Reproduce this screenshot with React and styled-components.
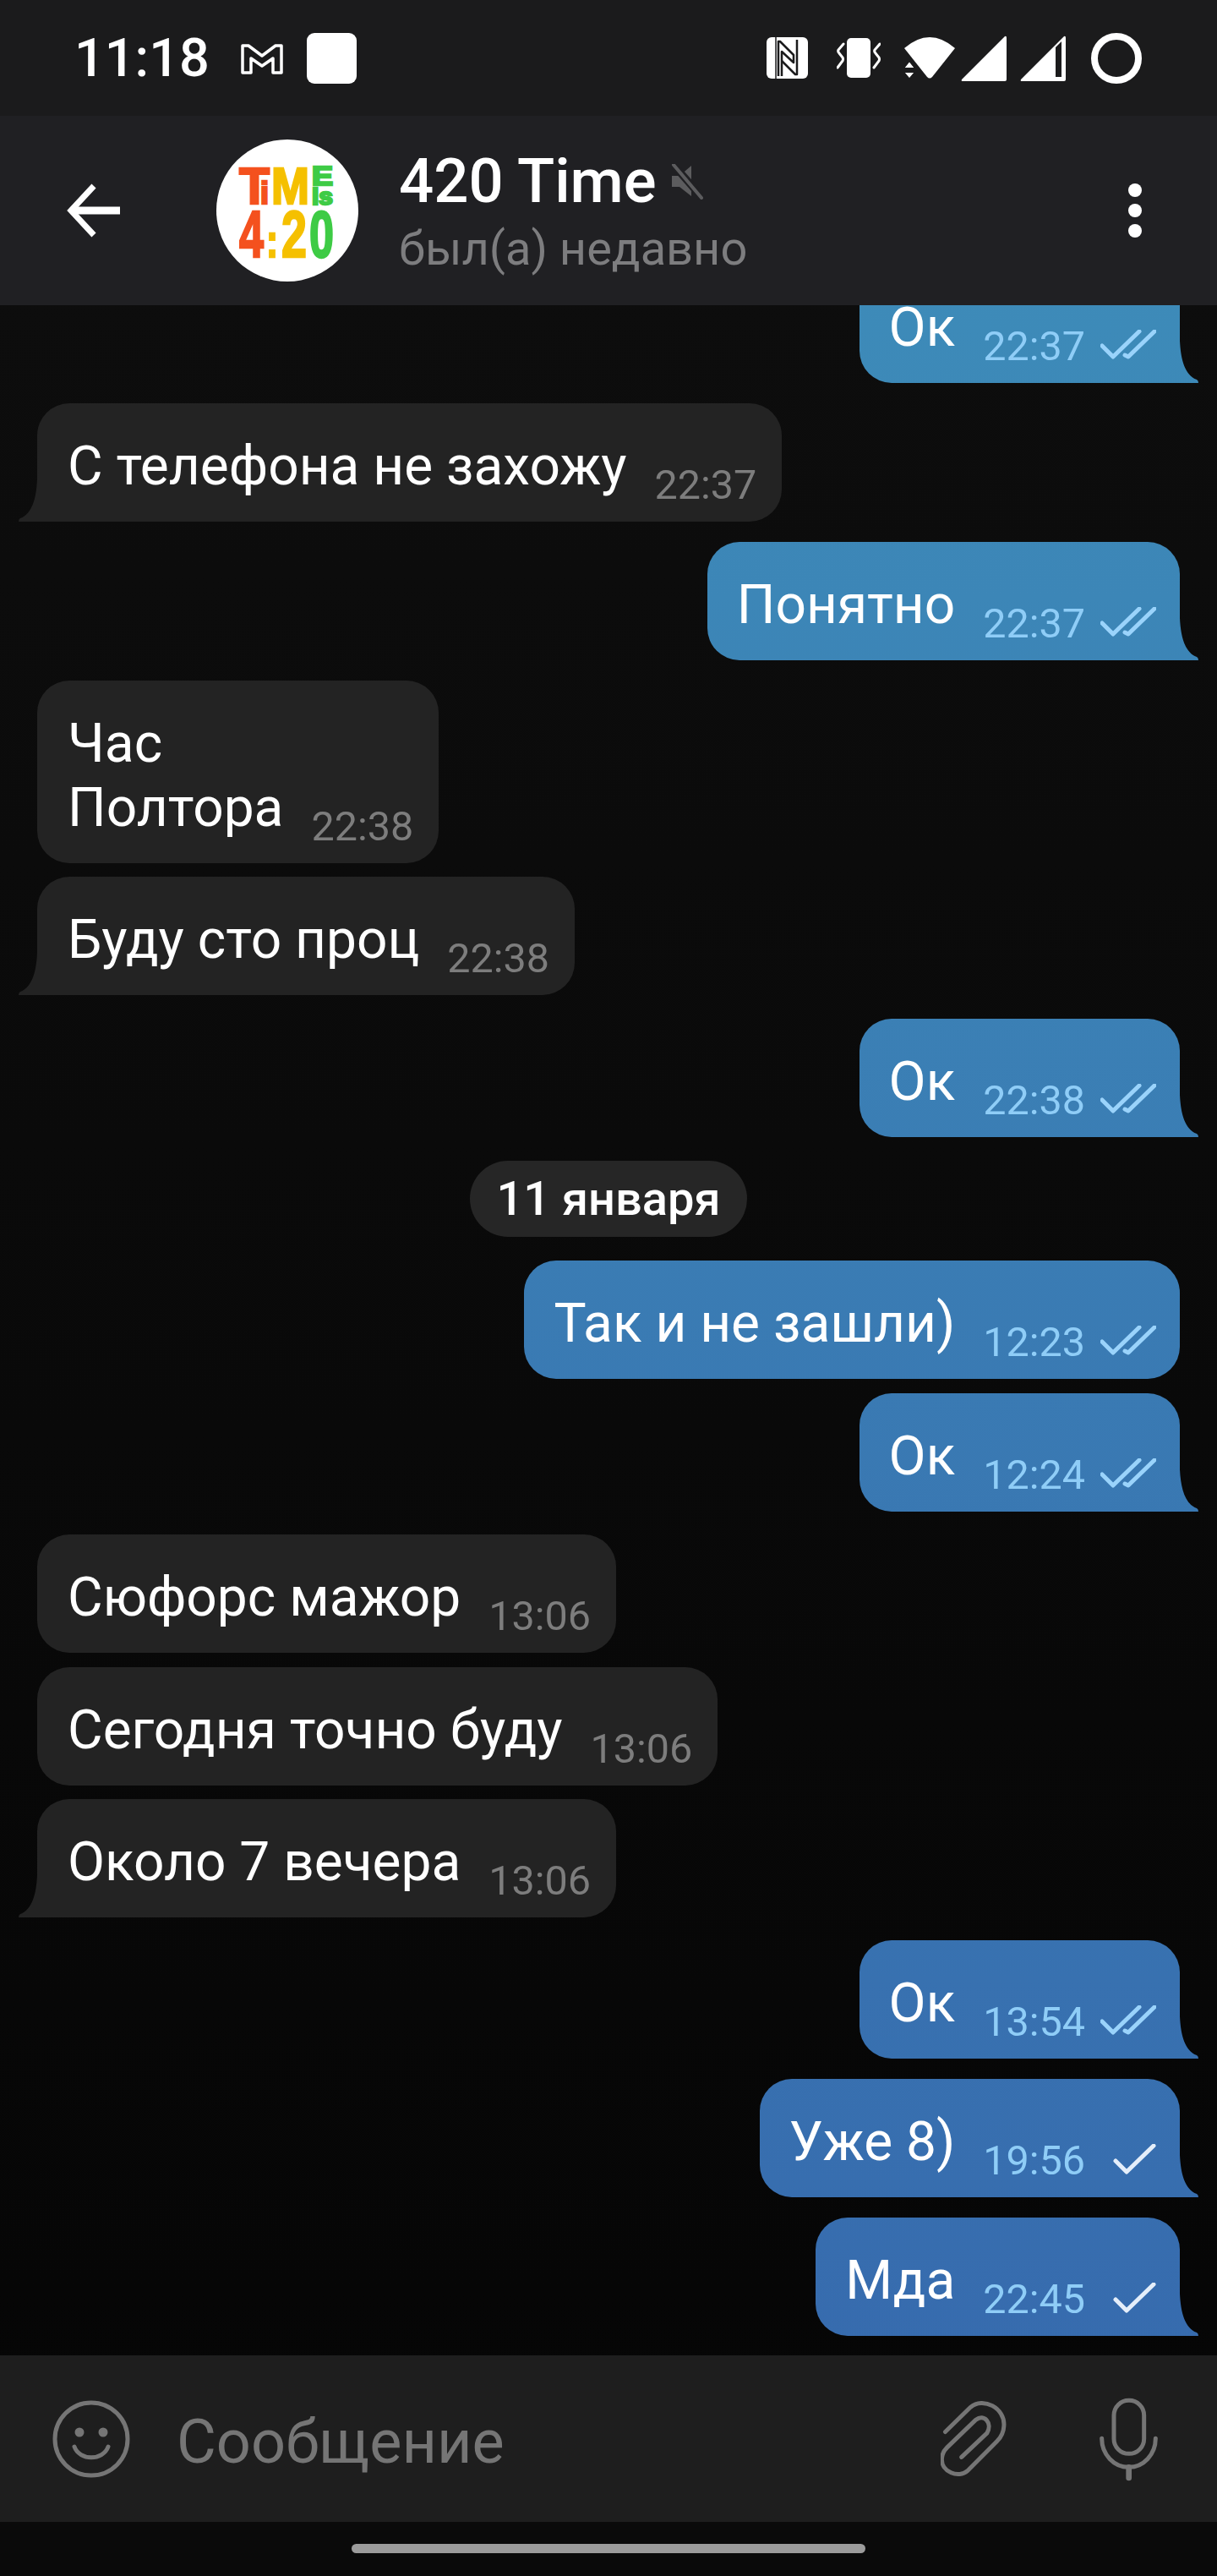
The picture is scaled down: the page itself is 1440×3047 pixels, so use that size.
import React from 'react'
import styled, { createGlobalStyle } from 'styled-components'

const GlobalStyle = createGlobalStyle`
    html, body {
        margin: 0;
        padding: 0;
        background: #0a0a0a;
    }
    body {
        font-family: Roboto, "Noto Sans", sans-serif;
    }
`

const messages = [
    { out: true, text: 'Ок', time: '22:37', ticks: 2, tail: true, gap: 0 },
    { text: 'С телефона не захожу', time: '22:37', tail: true, gap: 24 },
    { out: true, text: 'Понятно', time: '22:37', ticks: 2, tail: true, gap: 24 },
    { text: 'Час\nПолтора', time: '22:38', gap: 24 },
    { text: 'Буду сто проц', time: '22:38', tail: true, gap: 16 },
    { out: true, text: 'Ок', time: '22:38', ticks: 2, tail: true, gap: 28 },
    { date: '11 января', gap: 28 },
    { out: true, text: 'Так и не зашли)', time: '12:23', ticks: 2, gap: 28 },
    { out: true, text: 'Ок', time: '12:24', ticks: 2, tail: true, gap: 17 },
    { text: 'Сюфорс мажор', time: '13:06', gap: 27 },
    { text: 'Сегодня точно буду', time: '13:06', gap: 17 },
    { text: 'Около 7 вечера', time: '13:06', tail: true, gap: 16 },
    { out: true, text: 'Ок', time: '13:54', ticks: 2, tail: true, gap: 27 },
    { out: true, text: 'Уже 8)', time: '19:56', ticks: 1, tail: true, gap: 24 },
    { out: true, text: 'Мда', time: '22:45', ticks: 1, tail: true, gap: 24 },
]

const Ticks = ({ count }) => (
    <TickIcon viewBox="0 0 66 36" $single={count === 1}>
        {count === 1 ? (
            <path d="M18 20 L31 33 L63 2" />
        ) : (
            <>
                <path d="M2 19 L15 32 L46 2" />
                <path d="M29 30 L33 32 L64 2" />
            </>
        )}
    </TickIcon>
)

const Logo = () => (
    <svg viewBox="0 0 168 168" width="168" height="168">
        <LogoText x="27" y="76" fontSize="62" fill="#f4511e" stroke="#f4511e" textLength="36" lengthAdjust="spacingAndGlyphs">T</LogoText>
        <LogoText x="52" y="76" fontSize="36" fill="#f4511e" stroke="#f4511e" textLength="10" lengthAdjust="spacingAndGlyphs">i</LogoText>
        <LogoText x="65" y="76" fontSize="62" fill="#f5c000" stroke="#f5c000" textLength="45" lengthAdjust="spacingAndGlyphs">M</LogoText>
        <LogoText x="113" y="54" fontSize="31" fill="#3ecb45" stroke="#3ecb45" textLength="25" lengthAdjust="spacingAndGlyphs">E</LogoText>
        <LogoText x="113" y="77" fontSize="28" fill="#3ecb45" stroke="#3ecb45" textLength="25" lengthAdjust="spacingAndGlyphs">is</LogoText>
        <LogoText x="27" y="139" fontSize="78" fill="#f4511e" stroke="#f4511e" textLength="29" lengthAdjust="spacingAndGlyphs">4</LogoText>
        <LogoText x="59" y="139" fontSize="56" fill="#f5c000" stroke="#f5c000" textLength="14" lengthAdjust="spacingAndGlyphs">:</LogoText>
        <LogoText x="77" y="139" fontSize="78" fill="#f5c000" stroke="#f5c000" textLength="30" lengthAdjust="spacingAndGlyphs">2</LogoText>
        <LogoText x="110" y="139" fontSize="78" fill="#3ecb45" stroke="#3ecb45" textLength="29" lengthAdjust="spacingAndGlyphs">0</LogoText>
    </svg>
)

const App = () => {
    return (
        <Screen>
            <GlobalStyle />
            <StatusBar>
                <Clock>11:18</Clock>
                <StatusIcon viewBox="0 0 50 38" width="50" height="38" $ml={37}>
                    <path d="M2 4 H9 L25 16 L41 4 H48 V36 H38 V19 L25 28 L12 19 V36 H2 Z" fill="none" stroke="#fff" strokeWidth="3.5" strokeLinejoin="round" />
                </StatusIcon>
                <NotifySquare />
                <StatusSpacer />
                <StatusIcon viewBox="0 0 49 49" width="49" height="49">
                    <rect width="49" height="49" rx="6" fill="#fff" />
                    <path d="M11 0 V49" stroke="#1b1b1c" strokeWidth="1.5" fill="none" />
                    <path d="M14 46 V5 H16 L32 21 V30 L18 17 V46" fill="none" stroke="#1b1b1c" strokeWidth="2.5" strokeLinejoin="round" />
                    <path d="M36 3 V44 H34 L18 28" fill="none" stroke="#1b1b1c" strokeWidth="2.5" strokeLinejoin="round" />
                </StatusIcon>
                <StatusIcon viewBox="0 0 52 49" width="52" height="49" $ml={34}>
                    <rect x="12" y="1" width="28" height="47" rx="5" fill="#fff" />
                    <path d="M8 8 L2 15 Q1 17 3 19 L7 24 Q8 26 7 28 L1 36" fill="none" stroke="#fff" strokeWidth="3" strokeLinecap="round" />
                    <path d="M51 8 L45 15 Q44 17 46 19 L50 24 Q51 26 50 28 L44 36" fill="none" stroke="#fff" strokeWidth="3" strokeLinecap="round" />
                </StatusIcon>
                <StatusIcon viewBox="0 0 60 49" width="60" height="49" $ml={28}>
                    <path d="M0 13 Q30 -13 60 13 L33 47 Q30 50 27 47 Z" fill="#fff" />
                    <path d="M-1 37 L6 28 L13 37 Z M-1 41 H13 L6 49 Z" fill="#fff" stroke="#1b1b1c" strokeWidth="2" />
                    <path d="M1 36 L6 30 L11 36 Z M1 42 H11 L6 48 Z" fill="#fff" />
                </StatusIcon>
                <StatusIcon viewBox="0 0 54 54" width="54" height="54" $ml={7}>
                    <path d="M1 52 L52 1 Q54 0 54 3 V52 Q54 54 52 54 H2 Q0 54 1 52 Z" fill="#fff" />
                </StatusIcon>
                <StatusIcon viewBox="0 0 54 54" width="54" height="54" $ml={16}>
                    <path d="M1 52 L52 1 Q54 0 54 3 V52 Q54 54 52 54 H2 Q0 54 1 52 Z" fill="#fff" />
                    <path d="M42 14 L49 7 V49 H42 Z" fill="#1b1b1c" />
                </StatusIcon>
                <StatusIcon viewBox="0 0 60 60" width="60" height="60" $ml={30}>
                    <circle cx="30" cy="30" r="26" fill="none" stroke="#fff" strokeWidth="8" />
                </StatusIcon>
            </StatusBar>

            <Header>
                <svg viewBox="0 0 64 64" width="64" height="64" fill="none" stroke="#fff">
                    <path d="M63 32 H5" strokeWidth="9" />
                    <path d="M32 3 L5 32 L32 61" strokeWidth="7" />
                </svg>
                <Avatar><Logo /></Avatar>
                <ChatInfo>
                    <TitleRow>
                        <ChatTitle>420 Time</ChatTitle>
                        <svg viewBox="0 0 38 42" width="38" height="42">
                            <path d="M1 14 H10 L24 2 V38 L10 27 H1 Z" fill="#5c5c5e" />
                            <path d="M3 1 L37 40" stroke="#202023" strokeWidth="9" />
                            <path d="M3 1 L36 40" stroke="#5c5c5e" strokeWidth="4" strokeLinecap="round" />
                        </svg>
                    </TitleRow>
                    <ChatStatus>был(а) недавно</ChatStatus>
                </ChatInfo>
                <MenuDots>
                    <i /><i /><i />
                </MenuDots>
            </Header>

            <Messages>
                {messages.map((m, i) =>
                    m.date ? (
                        <DatePill key={i} $gap={m.gap}>{m.date}</DatePill>
                    ) : (
                        <Bubble key={i} $out={m.out} $tail={m.tail} $gap={m.gap}>
                            <BubbleText>{m.text}</BubbleText>
                            <Meta $out={m.out}>
                                <span>{m.time}</span>
                                {m.ticks && <Ticks count={m.ticks} />}
                            </Meta>
                        </Bubble>
                    )
                )}
            </Messages>

            <InputBar>
                <svg viewBox="0 0 92 92" width="92" height="92" fill="none" stroke="#757575">
                    <circle cx="46" cy="46" r="43" strokeWidth="5" />
                    <circle cx="32" cy="38" r="5.5" fill="#757575" stroke="none" />
                    <circle cx="60" cy="38" r="5.5" fill="#757575" stroke="none" />
                    <path d="M26 55 C32 72 60 72 66 55" strokeWidth="5" strokeLinecap="round" />
                </svg>
                <Placeholder>Сообщение</Placeholder>
                <svg viewBox="40 30 240 280" width="80" height="93" fill="none" stroke="#757575" strokeWidth="15" strokeLinecap="round">
                    <path d="M56 146 L146 58 C190 20 270 60 265 125 C264 145 255 165 240 180 L135 285 C105 312 40 290 44 240 C45 225 52 212 62 202 L165 103 C195 80 225 115 205 150 L114 236" />
                </svg>
                <MicIcon viewBox="595 20 225 300" width="75" height="100" fill="none" stroke="#757575" strokeWidth="15" strokeLinecap="round">
                    <rect x="655" y="33" width="107" height="189" rx="53" />
                    <path d="M612 168 C612 225 655 270 708 270 C760 270 803 225 803 168" />
                    <path d="M708 270 V308" strokeWidth="20" />
                </MicIcon>
            </InputBar>

            <NavBar>
                <HomePill />
            </NavBar>
        </Screen>
    )
}

//styled components
const Screen = styled.div`
    width: 1440px;
    height: 3047px;
    display: flex;
    flex-direction: column;
    overflow: hidden;
    background: linear-gradient(180deg, #0e0e0e 0%, #050505 100%);
    color: #fff;
`

const StatusBar = styled.div`
    height: 137px;
    flex: none;
    display: flex;
    align-items: center;
    padding: 0 89px 0 88px;
    background: #1b1b1c;
    box-sizing: border-box;
`

const Clock = styled.div`
    font-size: 63px;
    line-height: 63px;
    font-weight: 500;
`

const StatusIcon = styled.svg`
    flex: none;
    display: block;
    margin-left: ${props => props.$ml || 0}px;
`

const NotifySquare = styled.div`
    width: 59px;
    height: 60px;
    margin-left: 28px;
    border-radius: 9px;
    background: #fff;
`

const StatusSpacer = styled.div`
    flex: 1;
`

const Header = styled.div`
    height: 224px;
    flex: none;
    display: flex;
    align-items: center;
    padding: 0 89px 0 79px;
    background: #202023;
    box-sizing: border-box;
`

const Avatar = styled.div`
    width: 168px;
    height: 168px;
    flex: none;
    margin-left: 113px;
    border-radius: 50%;
    background: #fff;
    overflow: hidden;
`

const LogoText = styled.text`
    font-family: "Liberation Sans", Arimo, sans-serif;
    font-weight: 700;
    stroke-width: 2.5;
`

const ChatInfo = styled.div`
    flex: 1;
    margin-left: 48px;
    padding-top: 4px;
    display: flex;
    flex-direction: column;
`

const TitleRow = styled.div`
    display: flex;
    align-items: center;
    gap: 17px;
`

const ChatTitle = styled.div`
    font-size: 72.5px;
    line-height: 84px;
    font-weight: 500;
`

const ChatStatus = styled.div`
    font-size: 56px;
    line-height: 70px;
    margin-top: 2px;
    color: #7d7d7f;
`

const MenuDots = styled.div`
    width: 16px;
    display: flex;
    flex-direction: column;
    gap: 8px;

    i {
        width: 16px;
        height: 16px;
        border-radius: 50%;
        background: #fff;
    }
`

const Messages = styled.div`
    flex: 1;
    min-height: 0;
    display: flex;
    flex-direction: column;
    justify-content: flex-end;
    overflow: hidden;
    padding: 0 44px 23px;
`

const Bubble = styled.div`
    flex: none;
    position: relative;
    align-self: ${props => (props.$out ? 'flex-end' : 'flex-start')};
    display: flex;
    align-items: flex-end;
    gap: 33px;
    margin-top: ${props => props.$gap}px;
    padding: 37px ${props => (props.$out ? 28 : 30)}px 20px ${props => (props.$out ? 35 : 36)}px;
    border-radius: 38px;
    background: ${props => (props.$out
        ? 'linear-gradient(180deg, #3e8fba 0%, #3668ad 100%) fixed'
        : '#232323')};
    ${props => props.$tail && (props.$out
        ? 'border-bottom-right-radius: 0;'
        : 'border-bottom-left-radius: 0;')}

    &::after {
        content: '';
        display: ${props => (props.$tail ? 'block' : 'none')};
        position: absolute;
        bottom: 0;
        width: 30px;
        height: 50px;
        ${props => (props.$out
            ? `right: -22px;
               clip-path: path('M0 0 H8 C9 22 14 41 28 46 Q30 47 30 50 H0 Z');`
            : `left: -22px;
               clip-path: path('M30 0 H22 C21 22 16 41 2 46 Q0 47 0 50 H30 Z');`)}
        background: inherit;
    }
`

const BubbleText = styled.div`
    font-size: 64px;
    line-height: 76px;
    padding-bottom: 7px;
    white-space: pre-line;
    color: #fff;
`

const Meta = styled.div`
    display: flex;
    align-items: flex-end;
    gap: 18px;
    font-size: 48.5px;
    line-height: 46px;
    color: ${props => (props.$out ? '#8fcdf7' : '#7d7d7d')};
`

const TickIcon = styled.svg`
    width: 66px;
    height: 36px;
    margin-bottom: 7px;
    fill: none;
    stroke: ${props => (props.$single ? '#e4eefa' : '#9ad3fb')};
    stroke-width: 5;
    stroke-linecap: round;
    stroke-linejoin: round;
`

const DatePill = styled.div`
    flex: none;
    align-self: center;
    height: 90px;
    display: flex;
    align-items: center;
    margin-top: ${props => props.$gap}px;
    padding: 0 31px;
    border-radius: 45px;
    background: #262626;
    font-size: 56px;
    font-weight: 500;
`

const InputBar = styled.div`
    height: 197px;
    flex: none;
    display: flex;
    align-items: center;
    padding: 0 67px 0 62px;
    background: #1e1e1e;
    box-sizing: border-box;
`

const Placeholder = styled.div`
    flex: 1;
    margin: 8px 0 0 55px;
    font-size: 72px;
    line-height: 80px;
    color: #757575;
`

const MicIcon = styled.svg`
    margin-left: 105px;
`

const NavBar = styled.div`
    height: 64px;
    flex: none;
    display: flex;
    justify-content: center;
    padding-top: 26px;
    box-sizing: border-box;
    background: #0a0a0a;
`

const HomePill = styled.div`
    width: 608px;
    height: 11px;
    border-radius: 6px;
    background: #9b9b9b;
`

export default App
